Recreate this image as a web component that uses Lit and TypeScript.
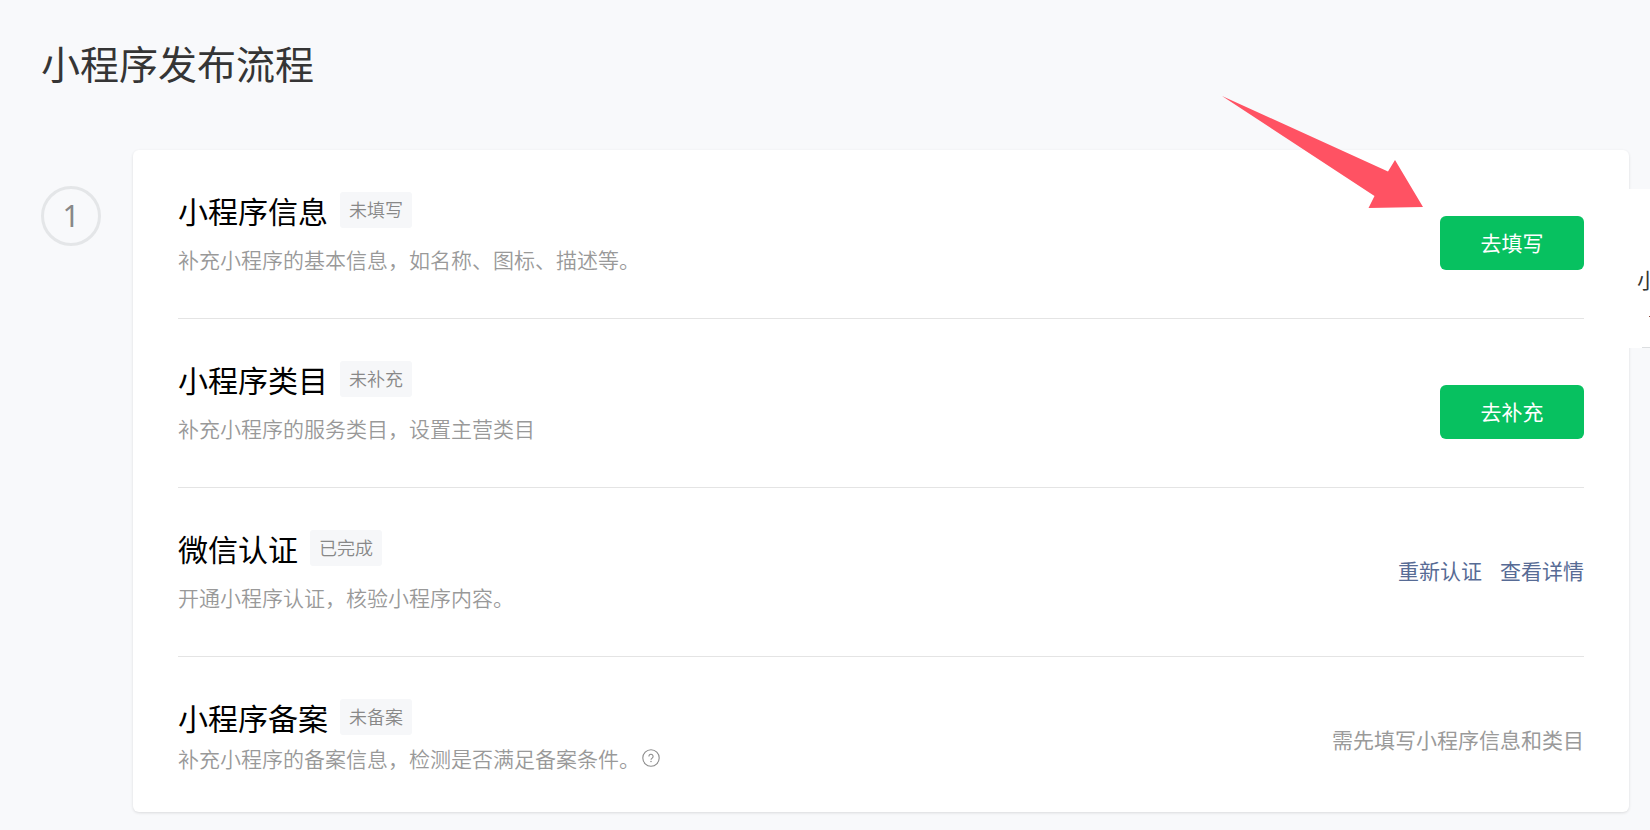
import { LitElement, html, css, svg, nothing } from "lit";
import { customElement } from "lit/decorators.js";

interface Task {
  title: string;
  tag: string;
  desc: string;
  help?: boolean;
  button?: string;
  links?: string[];
  note?: string;
}

const TASKS: Task[] = [
  { title: "小程序信息", tag: "未填写", desc: "补充小程序的基本信息，如名称、图标、描述等。", button: "去填写" },
  { title: "小程序类目", tag: "未补充", desc: "补充小程序的服务类目，设置主营类目", button: "去补充" },
  { title: "微信认证", tag: "已完成", desc: "开通小程序认证，核验小程序内容。", links: ["重新认证", "查看详情"] },
  { title: "小程序备案", tag: "未备案", desc: "补充小程序的备案信息，检测是否满足备案条件。", help: true, note: "需先填写小程序信息和类目" },
];

@customElement("app-root")
export class AppRoot extends LitElement {
  static styles = css`
    :host {
      display: block;
      position: relative;
      box-sizing: border-box;
      min-height: 100vh;
      padding: 34px 21px 18px 41px;
      overflow: hidden;
      background: #f8f9fb;
      color: #353535;
      font-family: "Noto Sans CJK SC", sans-serif;
      font-size: 21px;
      line-height: 30px;
    }
    h1, h2, p, ol { margin: 0; padding: 0; font-weight: 400; }
    h1 { font-size: 39px; line-height: 57px; margin-bottom: 59px; }
    .step { display: flex; align-items: flex-start; gap: 32px; }
    .num {
      flex: none;
      box-sizing: border-box;
      width: 60px;
      height: 60px;
      margin-top: 36px;
      border: 3px solid #e4e6e8;
      border-radius: 50%;
      color: #888;
      font: 30px/54px "Noto Sans", sans-serif;
      text-align: center;
    }
    .card {
      flex: 1;
      min-width: 0;
      padding: 0 45px;
      border-radius: 6px;
      background: #fff;
      box-shadow: 0 1px 3px rgba(0, 0, 0, 0.12);
      list-style: none;
    }
    .row {
      display: flex;
      align-items: center;
      justify-content: space-between;
      gap: 24px;
      padding: 42px 0 46px;
      border-bottom: 1px solid #e4e4e4;
    }
    .row:last-child { padding-bottom: 33px; border-bottom: 0; }
    .info { min-height: 80px; }
    .head { display: flex; align-items: flex-start; gap: 12px; margin-bottom: 16px; }
    .row:last-child .head { margin-bottom: 8px; }
    .row:not(:last-child) .info { height: 80px; }
    h2 { color: #000; font-size: 30px; line-height: 36px; }
    .tag {
      padding: 0 9px 2px;
      border-radius: 3px;
      background: #f6f7f9;
      color: #888;
      font-size: 18px;
      line-height: 34px;
      font-weight: 350;
    }
    .desc { display: flex; align-items: center; gap: 2px; color: #999; font-weight: 350; }
    .help { display: flex; padding: 0; border: 0; background: none; color: #8c8c8c; }
    .note { color: #9a9a9a; }
    .btn {
      flex: none;
      width: 144px;
      height: 54px;
      margin-top: 22px;
      padding: 0 0 2px;
      border: 0;
      border-radius: 6px;
      background: #07c160;
      color: #fff;
      font: inherit;
      cursor: pointer;
    }
    .links { display: flex; gap: 18px; }
    a { color: #576b95; text-decoration: none; }
    .float {
      position: absolute;
      top: 189px;
      right: 0;
      box-sizing: border-box;
      width: 21px;
      height: 159px;
      padding: 75px 0 0 8px;
      overflow: hidden;
      background: #fff;
      color: #353535;
      font-size: 21px;
      white-space: nowrap;
    }
    .dash { width: 1px; height: 1px; margin: 22px 0 0 auto; background: #8a4a3c; }
    .edge { position: absolute; right: 0; bottom: 0; width: 8px; height: 1px; background: #dcdee0; }
    .arrow { position: absolute; top: 96px; right: 227px; pointer-events: none; }
  `;

  private action(t: Task) {
    if (t.button) return html`<button class="btn" type="button">${t.button}</button>`;
    if (t.links) return html`<nav class="links">${t.links.map((l) => html`<a href="#">${l}</a>`)}</nav>`;
    return html`<span class="note">${t.note}</span>`;
  }

  private helpIcon() {
    return svg`<svg width="18" height="18" viewBox="0 0 18 18" fill="none" stroke="currentColor" aria-hidden="true">
      <circle cx="9" cy="9" r="8.2" stroke-width="1.1"/>
      <path d="M6.900 7.400a2.100 2.100 0 1 1 3.300 1.700c-.8.6-1.200.9-1.200 1.700" stroke-width="1.100"/>
      <circle cx="9" cy="12.6" r=".75" fill="currentColor" stroke="none"/>
    </svg>`;
  }

  render() {
    return html`
      <h1>小程序发布流程</h1>
      <section class="step">
        <div class="num">1</div>
        <ol class="card">
          ${TASKS.map(
            (t) => html`<li class="row">
              <div class="info">
                <div class="head"><h2>${t.title}</h2><span class="tag">${t.tag}</span></div>
                <p class="desc">${t.desc}${t.help
                  ? html`<button class="help" type="button" aria-label="?">${this.helpIcon()}</button>`
                  : nothing}</p>
              </div>
              ${this.action(t)}
            </li>`
          )}
        </ol>
      </section>
      <aside class="float">小<div class="dash"></div><div class="edge"></div></aside>
      <svg class="arrow" width="201" height="113" viewBox="0 0 201 113" aria-hidden="true">
        <path d="M0 0 L166 75.500 L173 64 L201 111 L146.500 112 L152.500 100 Z" fill="#ff5263"/>
      </svg>
    `;
  }
}
